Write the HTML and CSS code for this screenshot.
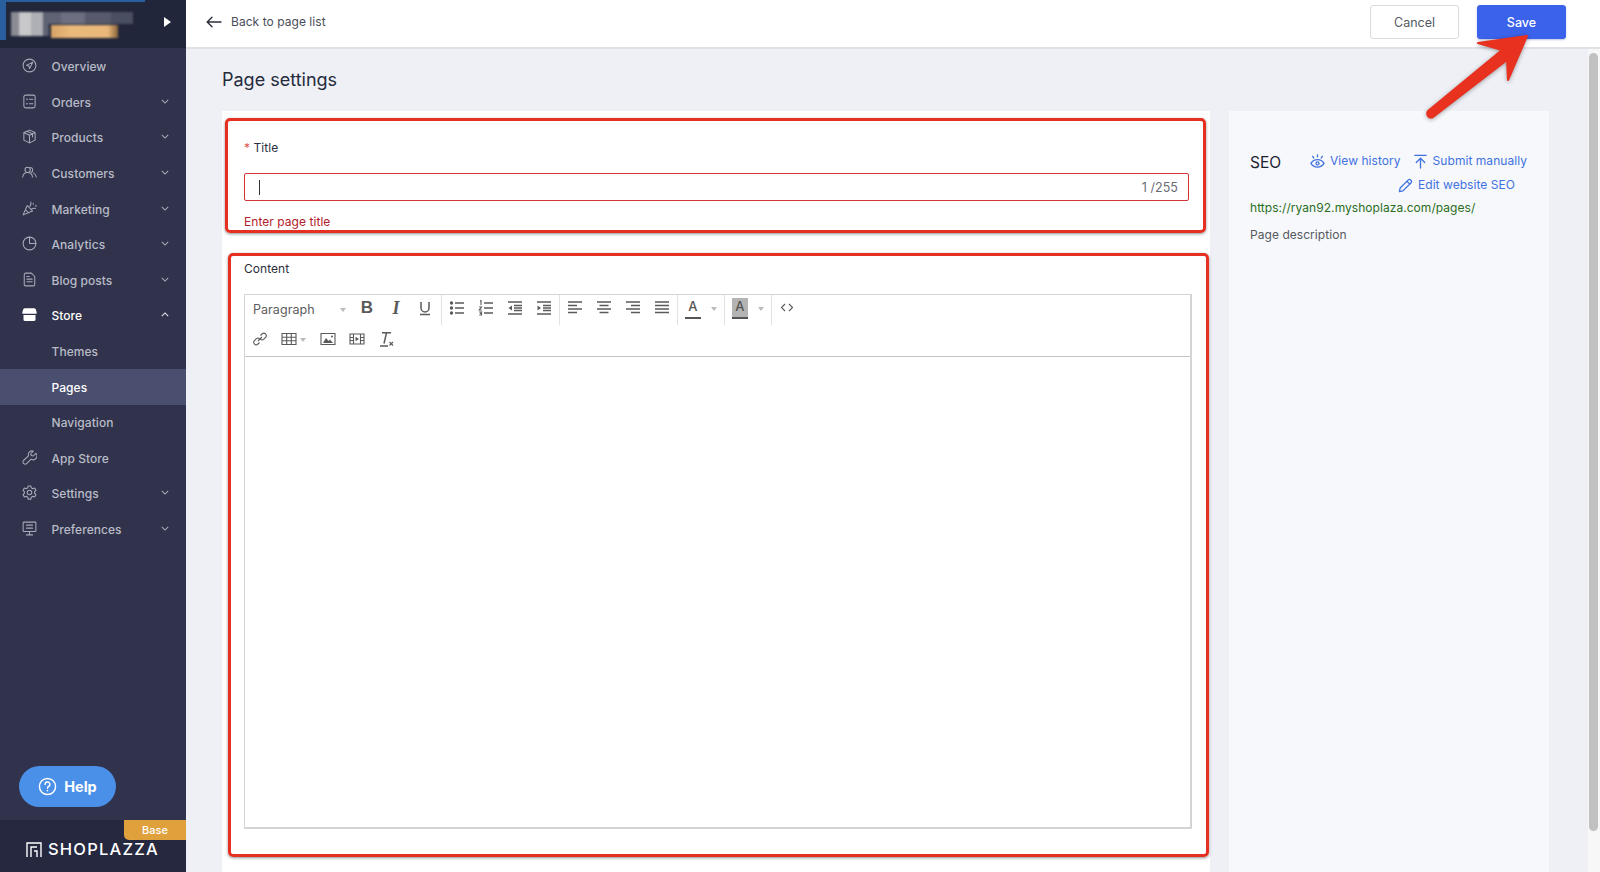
FILE: index.html
```html
<!DOCTYPE html>
<html lang="en">
<head>
<meta charset="utf-8">
<title>Page settings</title>
<link rel="stylesheet" href="styles.css">
</head>
<body>
<div class="app">
  <aside class="sidebar">
    <div class="store-head">
      <div class="store-logo"><span class="px px-a"></span><span class="px px-b"></span></div>
      <span class="store-play"></span>
    </div>
    <nav class="nav">
      <a class="nav-item"><svg class="ni" viewBox="0 0 20 20"><circle cx="10" cy="10" r="8.500"/><path d="M14.500 5.500 6 9.800l3.200 1 1 3.200z"/></svg><span class="nl">Overview</span></a>
      <a class="nav-item"><svg class="ni" viewBox="0 0 20 20"><rect x="2.500" y="1.500" width="15" height="17" rx="2.500"/><path d="M6 7h1.500M10 7h4.500M6 13h1.500M10 13h4.500"/></svg><span class="nl">Orders</span><svg class="chev" viewBox="0 0 10 6"><path d="M1 1l4 4 4-4"/></svg></a>
      <a class="nav-item"><svg class="ni" viewBox="0 0 20 20"><path d="M10 1.500l7.500 3.300v10L10 18.500l-7.500-3.700v-10zM2.500 4.800 10 8.300l7.500-3.500M10 8.300v10.200M6.500 3.100l7.500 3.400v4"/></svg><span class="nl">Products</span><svg class="chev" viewBox="0 0 10 6"><path d="M1 1l4 4 4-4"/></svg></a>
      <a class="nav-item"><svg class="ni" viewBox="0 0 20 20"><circle cx="7.500" cy="6.500" r="3.500"/><path d="M1 16c.5-4 3.300-6 6.500-6s6 2 6.500 6M11.500 3.200a3.500 3.500 0 0 1 1 6.500M15 10.500c2 .8 3.500 2.700 4 5.500"/></svg><span class="nl">Customers</span><svg class="chev" viewBox="0 0 10 6"><path d="M1 1l4 4 4-4"/></svg></a>
      <a class="nav-item"><svg class="ni" viewBox="0 0 20 20"><path d="M7 6 1.500 18.500l12.500-5.300zM4.500 11.500l4.500 4.500M10.500 7c1.200-1.400 1.700-3 1.400-5.500M13 10.500c1.500-1 3-1.200 5-.6M15 3v1.200M18 6.500h1.200"/></svg><span class="nl">Marketing</span><svg class="chev" viewBox="0 0 10 6"><path d="M1 1l4 4 4-4"/></svg></a>
      <a class="nav-item"><svg class="ni" viewBox="0 0 20 20"><circle cx="10" cy="10" r="8.500"/><path d="M10 1.500V10h8.500"/></svg><span class="nl">Analytics</span><svg class="chev" viewBox="0 0 10 6"><path d="M1 1l4 4 4-4"/></svg></a>
      <a class="nav-item"><svg class="ni" viewBox="0 0 20 20"><path d="M3 3.500A2 2 0 0 1 5 1.500h7.500l4.500 4.500v10.500a2 2 0 0 1-2 2H5a2 2 0 0 1-2-2zM6.500 9.500h7M6.500 13h7M6.500 6h3"/></svg><span class="nl">Blog posts</span><svg class="chev" viewBox="0 0 10 6"><path d="M1 1l4 4 4-4"/></svg></a>
      <a class="nav-item is-open"><svg class="ni ni-solid" viewBox="0 0 20 20"><path d="M4 1.500h12c1 0 1.700.5 2.200 1.300l1.300 4V9H.5V6.800l1.300-4C2.300 2 3 1.500 4 1.500zM2 10.500h16V17c0 1-.7 1.500-1.700 1.500H3.700C2.700 18.500 2 18 2 17z"/></svg><span class="nl">Store</span><svg class="chev" viewBox="0 0 10 6"><path d="M1 5l4-4 4 4"/></svg></a>
      <a class="nav-item sub"><span class="nl">Themes</span></a>
      <a class="nav-item sub is-active"><span class="nl">Pages</span></a>
      <a class="nav-item sub"><span class="nl">Navigation</span></a>
      <a class="nav-item"><svg class="ni" viewBox="0 0 20 20"><path d="M18.500 4.500 15 8l-2.700-.6L11.700 5l3.400-3.500a5 5 0 0 0-6.400 6.300L2 14a2.600 2.600 0 0 0 0 3.700l.4.400a2.600 2.600 0 0 0 3.700 0l6-6a5 5 0 0 0 6.400-7.600z"/></svg><span class="nl">App Store</span></a>
      <a class="nav-item"><svg class="ni" viewBox="0 0 20 20"><circle cx="10" cy="10" r="3"/><path d="M8.200 1.200h3.600l.6 2.500 2 1.200 2.500-.8 1.800 3.100-1.900 1.800v2l1.900 1.800-1.800 3.100-2.500-.8-2 1.200-.6 2.500H8.200l-.6-2.500-2-1.200-2.500.8-1.800-3.100L3.200 11V9L1.300 7.200l1.800-3.100 2.500.8 2-1.200z"/></svg><span class="nl">Settings</span><svg class="chev" viewBox="0 0 10 6"><path d="M1 1l4 4 4-4"/></svg></a>
      <a class="nav-item"><svg class="ni" viewBox="0 0 20 20"><rect x="1.500" y="1.500" width="17" height="12.500" rx="1"/><path d="M6 5.500h8M6 9.500h8M10 14v4.500M6 18.500h8"/></svg><span class="nl">Preferences</span><svg class="chev" viewBox="0 0 10 6"><path d="M1 1l4 4 4-4"/></svg></a>
    </nav>
    <button class="help"><svg class="help-ic" viewBox="0 0 20 20"><circle cx="10" cy="10" r="8.500"/><path d="M7.500 7.800A2.500 2.500 0 1 1 11 10c-.8.400-1 1-1 1.800M10 14.200v.3"/></svg>Help</button>
    <div class="brand">
      <span class="plan">Base</span>
      <svg class="brand-ic" viewBox="0 0 16 15"><path d="M1 15V1h14v14M5 15V5h6M11 15V9H8"/></svg>
      <span class="brand-name">SHOPLAZZA</span>
    </div>
  </aside>

  <div class="main">
    <header class="topbar">
      <a class="back"><svg class="back-ic" viewBox="0 0 16 12"><path d="M15 6H1.500M6 1.200 1.200 6 6 10.800"/></svg>Back to page list</a>
      <div class="actions">
        <button class="btn">Cancel</button>
        <button class="btn btn-primary">Save</button>
      </div>
    </header>
    <div class="body-row">
      <div class="scroll">
        <h1 class="page-title">Page settings</h1>
        <div class="cols">
          <section class="card">
            <div class="label title-label"><span class="req">*</span> Title</div>
            <div class="input"><span class="cursor"></span><span class="count">1 /255</span></div>
            <div class="err">Enter page title</div>
            <div class="label content-label">Content</div>
            <div class="editor">
              <div class="toolbar">
                <div class="tb-row">
                  <div class="tb-group tb-format"><span class="fmt">Paragraph</span><i class="car"></i>
                    <span class="glyph glyph-b">B</span>
                    <span class="glyph glyph-i">I</span>
                    <svg class="ti" viewBox="0 0 16 16"><path class="s" d="M4 2v6a4 4 0 0 0 8 0V2M3 14.500h10"/></svg>
                  </div>
                  <div class="tb-group">
                    <svg class="ti" viewBox="0 0 16 16"><path class="s" d="M6 3h9M6 8h9M6 13h9"/><circle cx="2.500" cy="3" r="1.700"/><circle cx="2.500" cy="8" r="1.700"/><circle cx="2.500" cy="13" r="1.700"/></svg>
                    <svg class="ti" viewBox="0 0 16 16"><path class="s" d="M6 3h9M6 8h9M6 13h9"/><path class="s s-thin" d="M2 1l1-.5V5M1.200 7h2.300L1.200 10h2.500M1.200 12h2.400l-1 1.500h1l-.1 1.500H1.200"/></svg>
                    <svg class="ti" viewBox="0 0 16 16"><path class="s" d="M1 2h14M7 5.500h8M7 8h8M7 10.500h8M1 14h14"/><path d="M5 5.500v5L1.500 8z"/></svg>
                    <svg class="ti" viewBox="0 0 16 16"><path class="s" d="M1 2h14M7 5.500h8M7 8h8M7 10.500h8M1 14h14"/><path d="M1.500 5.500v5L5 8z"/></svg>
                  </div>
                  <div class="tb-group">
                    <svg class="ti" viewBox="0 0 16 16"><path class="s" d="M1 2h14M1 5.500h9M1 9h14M1 12.500h9"/></svg>
                    <svg class="ti" viewBox="0 0 16 16"><path class="s" d="M1 2h14M3.500 5.500h9M1 9h14M3.500 12.500h9"/></svg>
                    <svg class="ti" viewBox="0 0 16 16"><path class="s" d="M1 2h14M6 5.500h9M1 9h14M6 12.500h9"/></svg>
                    <svg class="ti" viewBox="0 0 16 16"><path class="s" d="M1 2h14M1 5.500h14M1 9h14M1 12.500h14"/></svg>
                  </div>
                  <div class="tb-group">
                    <span class="color-a">A</span><i class="car car-sm"></i>
                  </div>
                  <div class="tb-group">
                    <span class="color-a color-bg">A</span><i class="car car-sm"></i>
                  </div>
                  <div class="tb-group tb-last">
                    <svg class="ti" viewBox="0 0 16 16"><path class="s s-thin" d="M6 4 2.500 7.500 6 11M10 4l3.500 3.500L10 11"/></svg>
                  </div>
                </div>
                <div class="tb-row tb-row2">
                  <svg class="ti" viewBox="0 0 16 16"><path class="s s-thin" d="M6 10 10 6M8.500 4.500l2-2a2.600 2.600 0 0 1 3.500 3.500l-2.200 2.200a2.600 2.600 0 0 1-3.500 0M7.500 11.500l-2 2A2.600 2.600 0 0 1 2 10l2.200-2.200a2.600 2.600 0 0 1 3.500 0"/></svg>
                  <span class="table-btn"><svg class="ti" viewBox="0 0 16 16"><path class="s s-thin" d="M1 2.500h14v11H1zM1 6.200h14M1 9.800h14M5.700 2.500v11M10.300 2.500v11"/></svg><i class="car car-sm"></i></span>
                  <svg class="ti" viewBox="0 0 16 16"><path class="s s-thin" d="M1 2.500h14v11H1z"/><path d="M3 12l3-5 2.500 3 1.500-1.500 3 3.500z"/><circle cx="12" cy="5.500" r="1"/></svg>
                  <svg class="ti" viewBox="0 0 16 16"><path class="s s-thin" d="M1 3h14v10H1zM4.500 3v10M11.500 3v10M1 6.500h3.500M1 9.500h3.500M11.500 6.500H15M11.500 9.500H15"/><path d="M6.500 5.800v4.400L10 8z"/></svg>
                  <svg class="ti" viewBox="0 0 16 16"><path class="s" d="M4 1.800h9M8.500 1.800 6 12.500M2 15h8"/><path class="s s-thin" d="M11.500 11l3.500 3.500M15 11l-3.500 3.500"/></svg>
                </div>
              </div>
              <div class="editor-area"></div>
            </div>
          </section>
          <section class="seo">
            <div class="seo-head">
              <span class="seo-title">SEO</span>
              <div class="seo-links">
                <a class="link"><svg class="li" viewBox="0 0 16 16"><path d="M1 10c1.600-2.600 4-4 7-4s5.400 1.400 7 4c-1.600 2.600-4 4-7 4s-5.400-1.400-7-4z"/><circle cx="8" cy="10" r="1.600"/><path d="M8 1v2M2.800 2.500l1.200 1.700M13.200 2.500 12 4.200"/></svg>View history</a>
                <a class="link"><svg class="li" viewBox="0 0 16 16"><path d="M2 1.500h12M8 15V5M3.500 9 8 4.500 12.500 9"/></svg>Submit manually</a>
                <a class="link link-edit"><svg class="li" viewBox="0 0 16 16"><path d="M1.500 14.500l.8-3.800L11 2a1.600 1.600 0 0 1 2.300 0l.7.700a1.600 1.600 0 0 1 0 2.300l-8.700 8.700zM9.500 3.500l3 3"/></svg>Edit website SEO</a>
              </div>
            </div>
            <div class="seo-url">https://ryan92.myshoplaza.com/pages/</div>
            <div class="seo-desc">Page description</div>
          </section>
        </div>
      </div>
      <div class="scrollbar"><span class="thumb"></span></div>
    </div>
  </div>
</div>
<div class="mark mark-title"></div>
<div class="mark mark-content"></div>
<svg class="mark-arrow" viewBox="0 0 120 100"><path d="M108 6 59 13 83 20 9 81Q7 84 10 87 12 88 14 87L88 30 89 50z"/></svg>
</body>
</html>
```

FILE: styles.css
```css
* { box-sizing: border-box; }
html, body { margin: 0; height: 100%; overflow: hidden; }
body { font-family: Inter, "Noto Sans", sans-serif; font-size: 12px; letter-spacing: .05px; color: #2b2f3d; }
a { color: inherit; text-decoration: none; }
button { font: inherit; cursor: pointer; }

.app { display: flex; width: 1600px; height: 872px; }

/* Sidebar */
.sidebar { width: 186px; flex: none; background: #30334b; display: flex; flex-direction: column; }
.store-head { height: 48px; flex: none; background: #22263a; display: flex; align-items: center; justify-content: flex-end; padding: 0 15px 5px 0; position: relative;
  background-image: linear-gradient(#2a5f9f, #2a5f9f), linear-gradient(#2a5f9f, #2a5f9f);
  background-size: 145px 2px, 6px 38px; background-position: 0 0, 0 2px; background-repeat: no-repeat; }
.store-logo { position: absolute; left: 11px; top: 12px; width: 130px; height: 27px; filter: blur(1px); }
.px { display: block; position: absolute; }
.px-a { left: 0; top: 0; width: 122px; height: 24px;
  background: linear-gradient(90deg, #8a8b93 0 8px, #c8c8ca 8px 20px, #aeb0b6 20px 32px, #5f6373 32px 50px, #6b6f80 50px 74px, #565a6c 74px 100px, #4a4e61 100px 122px);
  clip-path: polygon(0 0, 100% 0, 100% 50%, 31% 50%, 31% 100%, 0 100%); }
.px-b { left: 40px; top: 13px; width: 67px; height: 13px; background: linear-gradient(90deg, #d9a468 0, #eab97c 30%, #e9b87a 85%, #87633d 100%); }
.store-play { width: 0; height: 0; border-left: 7px solid #fff; border-top: 5px solid transparent; border-bottom: 5px solid transparent; }
.nav { flex: none; padding-top: 1px; }
.nav-item { display: flex; align-items: center; height: 35.6px; padding: 0 17px 0 22px; color: #b9bbc8; font-weight: 500; }
.ni { width: 15px; height: 15px; margin-right: 14.500px; flex: none; fill: none; stroke: #a8abb9; stroke-width: 1.400; stroke-linejoin: round; stroke-linecap: round; margin-top: -2px; }
.ni-solid { fill: #fff; stroke: none; }
.nl { flex: 1; }
.chev { width: 8px; height: 5px; flex: none; fill: none; stroke: #a8abb9; stroke-width: 1.300; margin-top: -2px; }
.is-open { color: #fff; }
.is-open .chev { stroke: #e8e8ee; }
.sub { padding-left: 51.500px; }
.is-active { background: #4a4f70; color: #fff; }
.help { margin: auto 0 13px 19px; width: 97px; height: 41px; flex: none; border: 0; border-radius: 21px; background: #4a90e8; color: #fff; font-weight: 700; font-size: 14.500px; display: flex; align-items: center; justify-content: center; gap: 7px; }
.help-ic { width: 19px; height: 19px; fill: none; stroke: #fff; stroke-width: 1.500; stroke-linecap: round; }
.brand { height: 52px; flex: none; background: #262840; display: flex; align-items: center; padding: 6px 0 0 26px; position: relative; }
.plan { position: absolute; right: 0; top: 0; width: 62px; height: 20px; background: #e0a03c; color: #fff; font-size: 11px; font-weight: 500; border-radius: 0 0 0 5px; display: flex; align-items: center; justify-content: center; }
.brand-ic { width: 16px; height: 15px; fill: none; stroke: #fff; stroke-width: 1.400; margin-right: 6px; }
.brand-name { color: #fff; font-size: 16.500px; font-weight: 500; letter-spacing: 1.200px; }

/* Main */
.main { flex: 1; min-width: 0; display: flex; flex-direction: column; background: #eef0f6; }
.topbar { height: 49px; flex: none; background: #fff; border-bottom: 2px solid #dfe1e7; display: flex; align-items: center; justify-content: space-between; padding: 0 34px 3px 20px; }
.back { display: flex; align-items: center; color: #4a4d57; font-weight: 400; margin-top: -1px; }
.back-ic { width: 16px; height: 12px; margin-right: 9px; fill: none; stroke: #2b2f3d; stroke-width: 1.400; stroke-linecap: round; }
.actions { display: flex; gap: 18px; }
.btn { width: 89px; height: 34px; border: 1px solid #d9dbe0; border-radius: 3px; background: #fff; color: #555862; font-size: 12.500px; }
.btn-primary { background: #3b62ea; border-color: #3b62ea; color: #fff; font-weight: 500; box-shadow: 0 1px 2px rgba(40,60,160,.3); }

.body-row { flex: 1; min-height: 0; display: flex; }
.scroll { flex: 1; min-width: 0; padding: 0 51px 0 36px; overflow: hidden; }
.page-title { margin: 0; height: 62px; padding-top: 18px; font-size: 18px; line-height: 26px; font-weight: 400; letter-spacing: 0; color: #252a3b; }
.cols { display: flex; gap: 19px; height: 761px; }

.card { width: 988px; background: #fff; padding: 0 18px 0 22px; flex: none; }
.label { color: #2b2f3d; line-height: 18px; }
.title-label { padding-top: 28px; box-sizing: content-box; height: 18px; }
.req { color: #e5534b; }
.input { margin: 16px 3px 0 0; height: 28px; border: 1px solid #d1343a; border-radius: 2px; display: flex; align-items: center; justify-content: space-between; padding: 0 10px 0 14px; }
.cursor { width: 1px; height: 15px; background: #333; }
.count { color: #6a6d75; font-size: 12.500px; }
.err { color: #b3202a; margin-top: 12px; line-height: 18px; }
.content-label { margin-top: 29px; }
.editor { margin-top: 16px; height: 535px; border: 1px solid #d4d4d4; border-width: 1px 2px 2px 1px; display: flex; flex-direction: column; }
.toolbar { height: 62px; flex: none; border-bottom: 1px solid #c4c4c4; }
.editor-area { flex: 1; background: #fff; }
.tb-row { display: flex; height: 31px; }
.tb-group { display: flex; align-items: center; height: 30px; border-right: 1px solid #e2e2e2; gap: 13px; padding: 0 7px 5px 7px; }
.tb-last { border-right: 0; padding-left: 7px; }
.tb-format { padding-left: 8px; padding-right: 8px; }
.fmt { color: #5c5c5c; font-size: 12.500px; width: 78px; padding-top: 3px; }
.tb-format .car { margin: 5px 0 0 -4px; }
.tb-row2 { align-items: center; gap: 13px; padding: 0 0 5px 7px; height: 30px; }
.ti { width: 16px; height: 16px; flex: none; fill: #5a5a5a; }
.s { fill: none; stroke: #5a5a5a; stroke-width: 1.500; }
.s-thin { stroke-width: 1.100; }
.glyph { width: 16px; flex: none; text-align: center; color: #5a5a5a; line-height: 18px; }
.glyph-b { font-family: "Liberation Sans", sans-serif; font-weight: 700; font-size: 17px; }
.glyph-i { font-family: "Liberation Serif", serif; font-style: italic; font-weight: 700; font-size: 18px; }
.car { display: block; width: 0; height: 0; border-top: 4px solid #bbb; border-left: 3.500px solid transparent; border-right: 3.500px solid transparent; flex: none; }
.car-sm { margin-top: 3px; margin-left: -3px; }
.color-a { width: 16px; height: 21px; font-size: 13px; line-height: 17px; text-align: center; color: #555; border-bottom: 2px solid #555; font-weight: 500; display: block; margin-top: 1px; }
.color-bg { background: #b4b4b4; }
.table-btn { display: flex; align-items: center; gap: 6px; margin-right: 1px; }
.table-btn .car { margin: 3px 0 0 -3px; }

/* SEO */
.seo { width: 320px; flex: none; background: #f7f8fb; padding: 41px 22px 0 21px; }
.seo-head { display: flex; align-items: flex-start; justify-content: space-between; }
.seo-title { font-size: 15.500px; line-height: 22px; color: #1f2230; }
.seo-links { display: flex; flex-wrap: wrap; justify-content: flex-end; width: 222px; column-gap: 12px; row-gap: 6px; }
.link { display: flex; align-items: center; color: #3f72e0; line-height: 18px; }
.li { width: 15px; height: 15px; margin-right: 5px; fill: none; stroke: #3f72e0; stroke-width: 1.400; stroke-linecap: round; stroke-linejoin: round; }
.link-edit { margin-right: 12px; }
.seo-url { color: #2a6e22; margin-top: 5px; line-height: 18px; }
.seo-desc { color: #55585f; margin-top: 9px; line-height: 18px; }

.scrollbar { width: 12px; flex: none; background: #f7f7f7; padding: 4px 2px 0 1px; }
.thumb { display: block; width: 9px; height: 778px; border-radius: 5px; background: #c1c1c1; }

/* Red annotations over the screenshot */
.mark { position: absolute; border: 3px solid #e63022; border-radius: 5px; box-shadow: 0 1px 3px rgba(0,0,0,.45); pointer-events: none; }
.mark-title { left: 225px; top: 118px; width: 981px; height: 115px; }
.mark-content { left: 228px; top: 253px; width: 981px; height: 604px; }
.mark-arrow { position: absolute; left: 1419px; top: 30px; width: 120px; height: 100px; filter: drop-shadow(0 1px 2px rgba(0,0,0,.35)); }
.mark-arrow path { fill: #e8321f; stroke: #e8321f; stroke-width: 2; stroke-linejoin: round; }
```
